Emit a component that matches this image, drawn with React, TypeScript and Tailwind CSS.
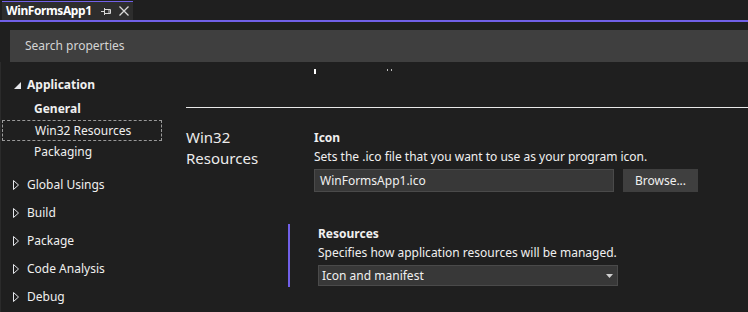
import React from "react";

const font = { fontFamily: '"Noto Sans", "Open Sans", sans-serif' };

function PinIcon() {
    return (
        <svg width="10" height="10" viewBox="0 0 10 10" className="text-[#d8d8d8]">
            <path d="M0 5.5 H3.5 M3.5 2 V9 M3.5 3.5 H9.5 V7.5 H3.5 M8 3.5 V7.5" stroke="currentColor" strokeWidth="1" fill="none" />
        </svg>
    );
}

function CloseIcon() {
    return (
        <svg width="10" height="10" viewBox="0 0 10 10" className="text-[#d8d8d8]">
            <path d="M0.5 0.5 L9.5 9.5 M9.5 0.5 L0.5 9.5" stroke="currentColor" strokeWidth="1.3" fill="none" />
        </svg>
    );
}

function Collapsed() {
    return (
        <svg width="6" height="10" viewBox="0 0 6 10" className="text-gray-200">
            <path d="M0.5 0.5 L5.5 5 L0.5 9.5 Z" stroke="currentColor" strokeWidth="1" fill="none" />
        </svg>
    );
}

function Expanded() {
    return (
        <svg width="7" height="7" viewBox="0 0 7 7" className="text-gray-200">
            <path d="M7 0 L7 7 L0 7 Z" fill="currentColor" />
        </svg>
    );
}

const groups = ["Global Usings", "Build", "Package", "Code Analysis", "Debug"];

export default function App() {
    return (
        <div style={font} className="w-[748px] h-[312px] overflow-hidden bg-[#1f1f1f] text-[#f0f0f0] text-[12px] flex flex-col">
            {/* TAB STRIP */}
            <div className="h-[22px] shrink-0 flex items-end border-b-2 border-[#7160e8]">
                <div className="ml-[2px] h-[19px] w-[131px] bg-[#2d2d2d] border-t border-[#7160e8] flex items-center pl-[4px]">
                    <span className="w-[95px] shrink-0 whitespace-nowrap font-bold text-white text-[12px] tracking-[-0.4px] leading-none">WinFormsApp1</span>
                    <span className="flex"><PinIcon /></span>
                    <span className="ml-[8px] flex"><CloseIcon /></span>
                </div>
            </div>

            {/* SEARCH */}
            <div className="mt-[8px] ml-[10px] h-[32px] shrink-0 bg-[#3f3f3f] flex items-center pl-[15px] text-[#d4d4d4]">
                Search properties
            </div>

            {/* BODY */}
            <div className="flex flex-1 min-h-0 border-l border-[#2b2b2b]">
                {/* NAV */}
                <div className="w-[185px] shrink-0 flex flex-col pt-[12px]">
                    <div className="h-[22px] flex items-center pl-[13px] gap-[6px]">
                        <Expanded />
                        <span className="font-bold">Application</span>
                    </div>
                    <div className="mt-[2px] h-[22px] flex items-center pl-[33px] font-bold">General</div>
                    <div className="mx-[1px] h-[21px] w-[160px] flex items-center pl-[32px] border border-dashed border-[#9a9a9a]">
                        Win32 Resources
                    </div>
                    <div className="h-[22px] flex items-center pl-[33px]">Packaging</div>
                    <div className="mt-[8px] flex flex-col">
                        {groups.map((g) => (
                            <div key={g} className="h-[28px] flex items-center pl-[12px] gap-[8px]">
                                <Collapsed />
                                <span>{g}</span>
                            </div>
                        ))}
                    </div>
                </div>

                {/* CONTENT */}
                <div className="flex-1 flex flex-col">
                    {/* scrolled-off text remnants */}
                    <div className="h-[13px] relative">
                        <div className="absolute left-[128px] top-[7px] w-[2px] h-[5px] bg-white" />
                        <div className="absolute left-[201px] top-[7px] w-[1px] h-[2px] bg-[#bbbbbb]" />
                        <div className="absolute left-[205px] top-[7px] w-[1px] h-[2px] bg-[#bbbbbb]" />
                    </div>
                    <div className="mt-[32px] h-px bg-[#e8e8e8]" />

                    <div className="flex mt-[19px]">
                        <div className="w-[128px] shrink-0 text-[15px] leading-[21px] text-[#ececec]">
                            Win32
                            <br />
                            Resources
                        </div>

                        <div className="flex flex-col">
                            <div className="font-bold leading-[19px] pt-[1px]">Icon</div>
                            <div className="leading-[19px]">Sets the .ico file that you want to use as your program icon.</div>
                            <div className="mt-[3px] flex gap-[9px]">
                                <div className="w-[300px] h-[23px] bg-[#383838] border border-[#4a4a4a] flex items-center pl-[5px]">
                                    WinFormsApp1.ico
                                </div>
                                <div className="w-[75px] h-[23px] bg-[#3f3f3f] flex items-center justify-center">
                                    Browse...
                                </div>
                            </div>
                        </div>
                    </div>

                    <div className="ml-[102px] mt-[32px] border-l-2 border-[#7160e8] pl-[28px] flex flex-col">
                        <div className="font-bold leading-[19px]">Resources</div>
                        <div className="leading-[19px]">Specifies how application resources will be managed.</div>
                        <div className="mt-[3px] mb-[1px] w-[300px] h-[21px] bg-[#383838] border border-[#4a4a4a] flex items-center justify-between pl-[3px] pr-[4px]">
                            <span>Icon and manifest</span>
                            <svg width="7" height="4" viewBox="0 0 7 4">
                                <path d="M0 0 H7 L3.5 4 Z" fill="#d0d0d0" />
                            </svg>
                        </div>
                    </div>
                </div>
            </div>
        </div>
    );
}
